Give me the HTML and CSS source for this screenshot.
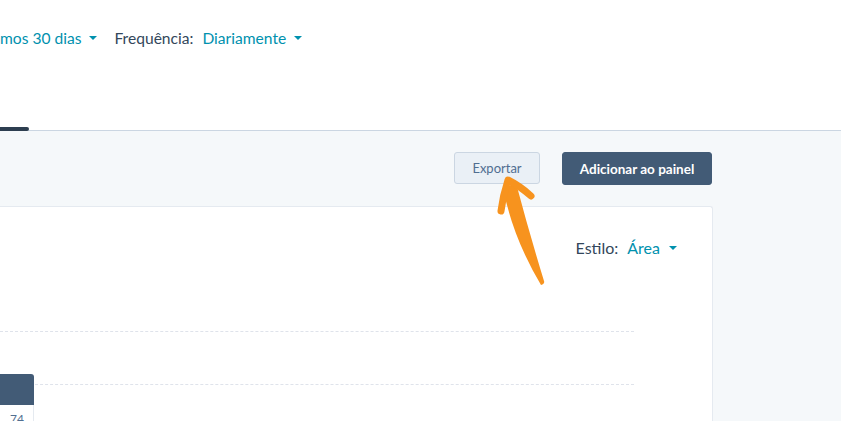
FILE: index.html
```html
<!DOCTYPE html>
<html lang="pt">
<head>
<meta charset="utf-8">
<link rel="stylesheet" href="styles.css">
</head>
<body>
<div class="page">
  <header class="header">
    <div class="filters">
      <div class="filter">
        <span class="value">mos 30 dias</span><span class="caret"></span>
      </div>
      <div class="filter">
        <span class="label">Frequência:</span>
        <span class="value">Diariamente</span><span class="caret"></span>
      </div>
    </div>
  </header>
  <div class="tabs">
    <div class="tab-active"></div>
  </div>
  <main class="content">
    <div class="actions">
      <button class="btn btn-secondary">Exportar</button>
      <button class="btn btn-primary">Adicionar ao painel</button>
    </div>
    <section class="card">
      <div class="card-toolbar">
        <span class="label">Estilo:</span>
        <span class="value">Área</span><span class="caret"></span>
      </div>
      <div class="chart">
        <div class="gridline"></div>
        <div class="gridline"></div>
        <div class="tooltip">
          <div class="tooltip-head"></div>
          <div class="tooltip-body">74</div>
        </div>
      </div>
    </section>
  </main>
  <svg class="arrow" width="841" height="421" viewBox="0 0 841 421" aria-hidden="true">
    <path d="M503,188 Q513,238 541,285 Q545,284 544,281 Q529,232 516,183 Z" fill="#f7931e"/>
    <path d="M501,211 Q503,195 508,180 Q520,186 531,196" fill="none" stroke="#f7931e" stroke-width="7" stroke-linecap="round" stroke-linejoin="round"/>
  </svg>
</div>
</body>
</html>
```
FILE: styles.css
```css
* { box-sizing: border-box; }
html, body { margin: 0; padding: 0; }
body {
  width: 841px;
  height: 421px;
  overflow: hidden;
  font-family: "Lato", "Open Sans", sans-serif;
  color: #33475b;
  background: #f5f8fa;
}
.page {
  position: relative;
  width: 841px;
  height: 421px;
  overflow: hidden;
}
.header {
  background: #fff;
  height: 127px;
  padding-top: 28px;
}
.filters {
  display: flex;
  align-items: center;
  gap: 17px;
  font-size: 15.6px;
  line-height: 20px;
}
.filter {
  display: flex;
  align-items: center;
}
.label { color: #33475b; margin-right: 9px; }
.value { color: #0091ae; }
.caret {
  display: inline-block;
  width: 0;
  height: 0;
  margin-left: 8px;
  border-left: 4px solid transparent;
  border-right: 4px solid transparent;
  border-top: 4px solid #0091ae;
}
.tabs {
  display: flex;
  align-items: flex-start;
  height: 4px;
  background: #fff;
  border-bottom: 1px solid #cbd6e2;
}
.tab-active {
  width: 29px;
  height: 4px;
  background: #2d3e50;
  border-radius: 0 2px 2px 0;
}
.content {
  padding-top: 21px;
}
.actions {
  display: flex;
  gap: 22px;
  padding-left: 454px;
  height: 33px;
}
.btn {
  font-family: inherit;
  height: 33px;
  border-radius: 3px;
  padding: 0;
  cursor: pointer;
}
.btn-secondary {
  width: 86px;
  height: 32px;
  background: #eaf0f6;
  border: 1px solid #cbd6e2;
  color: #506e91;
  font-size: 13px;
}
.btn-primary {
  width: 150px;
  background: #425b76;
  border: 1px solid #425b76;
  color: #fff;
  font-size: 13.5px;
  font-weight: 700;
}
.card {
  margin-top: 21px;
  width: 713px;
  height: 260px;
  background: #fff;
  border: 1px solid #e5eaf0;
  border-left: none;
  border-bottom: none;
  border-radius: 0 3px 0 0;
}
.card-toolbar {
  display: flex;
  align-items: center;
  justify-content: flex-end;
  padding: 31px 35px 0 0;
  font-size: 16px;
  line-height: 20px;
}
.card-toolbar .label { margin-right: 9px; }
.card-toolbar .caret { margin-left: 9px; }
.chart {
  position: relative;
  width: 634px;
  padding-top: 73px;
  display: flex;
  flex-direction: column;
  gap: 52px;
}
.gridline {
  height: 1px;
  border-top: 1px dashed #dfe3eb;
}
.tooltip {
  position: absolute;
  left: 0;
  top: 116px;
  width: 34px;
}
.tooltip-head {
  height: 31px;
  background: #425b76;
  border-radius: 0 3px 0 0;
}
.tooltip-body {
  height: 30px;
  background: #fff;
  border-right: 1px solid #e5eaf0;
  font-size: 12px;
  color: #516f90;
  padding: 6px 0 0 10px;
}
.arrow {
  position: absolute;
  left: 0;
  top: 0;
  pointer-events: none;
}
```
